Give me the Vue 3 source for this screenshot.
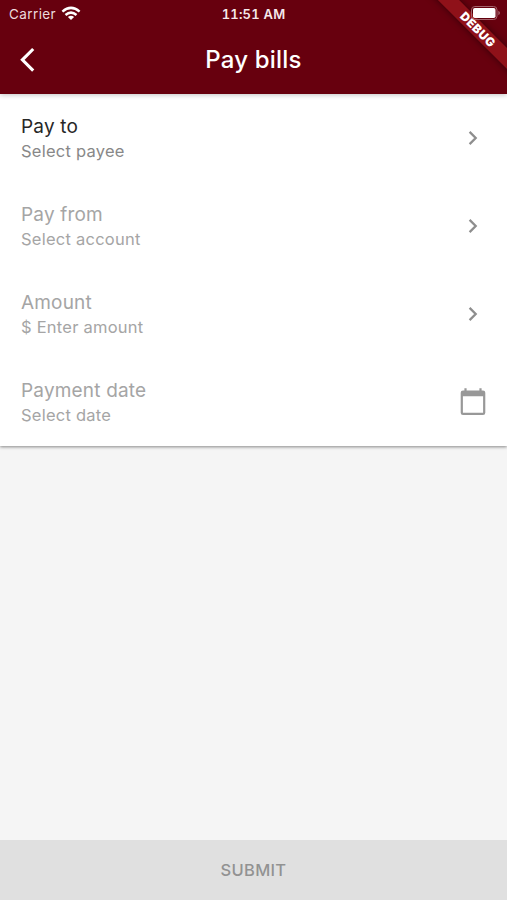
<script setup>
const rows = [
  { title: 'Pay to', sub: 'Select payee', active: true, k: 'payto' },
  { title: 'Pay from', sub: 'Select account', k: 'payfrom' },
  { title: 'Amount', sub: '$ Enter amount', k: 'amount' },
  { title: 'Payment date', sub: 'Select date', calendar: true, k: 'date' },
]
</script>

<template>
  <div class="screen">
    <header class="top">
      <div class="status">
        <div class="carrier">
          <span>Carrier</span>
          <svg class="wifi" width="20" height="15" viewBox="0 0 20 15">
            <g fill="none" stroke="#fff" stroke-width="2.5">
              <path d="M1.400 5.600Q10 -1.800 18.600 5.600" />
              <path d="M4.500 9Q10 4.200 15.500 9" />
            </g>
            <path d="M6.900 10.900Q10 8.500 13.100 10.900L10 14Z" fill="#fff" />
          </svg>
        </div>
        <span class="clock">11:51 AM</span>
      </div>
      <div class="bar">
        <svg class="back" width="20" height="28" viewBox="0 0 20 28">
          <path d="M15.200 3L4.400 13.800L15.200 24.600" fill="none" stroke="#fff" stroke-width="3.100" />
        </svg>
        <h1>Pay bills</h1>
      </div>
      <div class="ribbon-clip"><div class="ribbon"><span>DEBUG</span></div></div>
      <svg class="battery" width="31" height="16" viewBox="0 0 31 16">
        <rect x="1.500" y="1.500" width="25.500" height="13" rx="3.400" fill="none" stroke="#a5636c" stroke-width="1" />
        <rect x="3" y="3" width="22.500" height="10" rx="1.800" fill="#fff" />
        <path d="M28.300 5.800Q30 6.500 30 8Q30 9.500 28.300 10.200Z" fill="#a5636c" />
      </svg>
    </header>

    <main class="card">
      <div v-for="r in rows" :key="r.k" class="row" :class="[r.k, { active: r.active }]">
        <div class="text">
          <div class="title"><span>{{ r.title }}</span></div>
          <div class="sub"><span>{{ r.sub }}</span></div>
        </div>
        <svg v-if="r.calendar" class="icon" width="32" height="32" viewBox="0 0 32 32">
          <path fill="#989898" fill-rule="evenodd" d="M6 4.500H7.400V2.300H9.600V4.500H22.400V2.300H24.600V4.500H26Q28.300 4.500 28.300 6.800V26.700Q28.300 29 26 29H6Q3.700 29 3.700 26.700V6.800Q3.700 4.500 6 4.500ZM5.900 10.200V26.800H26.100V10.200Z" />
        </svg>
        <svg v-else class="icon" width="32" height="32" viewBox="0 0 32 32">
          <path d="M12.600 9.900L18.700 16L12.600 22.100" fill="none" stroke="#8e8e8e" stroke-width="2.300" />
        </svg>
      </div>
    </main>

    <div class="space"></div>
    <button class="submit"><span>SUBMIT</span></button>
  </div>
</template>

<style>
body { margin: 0; }
</style>

<style scoped>
.screen {
  width: 507px;
  height: 900px;
  display: flex;
  flex-direction: column;
  background: #f5f5f5;
  font-family: Inter, Roboto, sans-serif;
  overflow: hidden;
}
.top {
  position: relative;
  height: 94px;
  flex: none;
  background: #67000e;
  color: #fff;
  z-index: 1;
  box-shadow: 0 1px 5px rgba(0, 0, 0, 0.24);
}
.status {
  height: 27px;
  display: grid;
  grid-template-columns: 1fr auto 1fr;
  align-items: center;
}
.carrier {
  display: flex;
  align-items: center;
  gap: 5px;
  padding-left: 9px;
  font-size: 13.500px;
  letter-spacing: 0.400px;
  color: #ecdadd;
}
.wifi { margin-top: -1px; }
.clock {
  font-size: 13px;
  font-weight: 600;
  font-variant-numeric: tabular-nums;
  letter-spacing: 0.200px;
  color: #f5e9eb;
}
.bar {
  height: 66px;
  display: grid;
  grid-template-columns: 1fr auto 1fr;
  align-items: center;
}
.back { margin-left: 18px; }
h1 {
  margin: 0;
  font-size: 24px;
  font-weight: 500;
  line-height: 30px;
  letter-spacing: 0.200px;
}
.ribbon-clip {
  position: absolute;
  top: 0;
  right: 0;
  width: 94px;
  height: 94px;
  overflow: hidden;
}
.ribbon {
  position: absolute;
  left: -5px;
  top: 22px;
  width: 140px;
  height: 15px;
  display: flex;
  align-items: center;
  justify-content: center;
  background: #8f1119;
  box-shadow: 0 0 7px rgba(0, 0, 0, 0.5);
  transform: rotate(45deg);
  font-size: 12px;
  font-weight: 900;
  letter-spacing: 0.500px;
  line-height: 15px;
}
.battery {
  position: absolute;
  left: 470px;
  top: 5px;
}
.card {
  flex: none;
  background: #fff;
  box-shadow: 0 1px 3px rgba(0, 0, 0, 0.45);
}
.row {
  height: 88px;
  display: flex;
  align-items: center;
  justify-content: space-between;
  padding: 0 18px 0 21px;
  box-sizing: border-box;
  color: #a5a5a5;
}
.text { padding-bottom: 1px; }
.title {
  font-size: 19px;
  line-height: 26px;
  letter-spacing: 0.180px;
}
.sub {
  font-size: 16.500px;
  line-height: 22px;
  letter-spacing: 0.240px;
}
.active .title { color: #272727; }
.active .sub { color: #888; }
.submit {
  height: 60px;
  flex: none;
  border: 0;
  padding: 0;
  background: #e0e0e0;
  color: #929292;
  font: 500 16.500px Inter, Roboto, sans-serif;
  letter-spacing: 0.300px;
}
.space { flex: 1; }
</style>
